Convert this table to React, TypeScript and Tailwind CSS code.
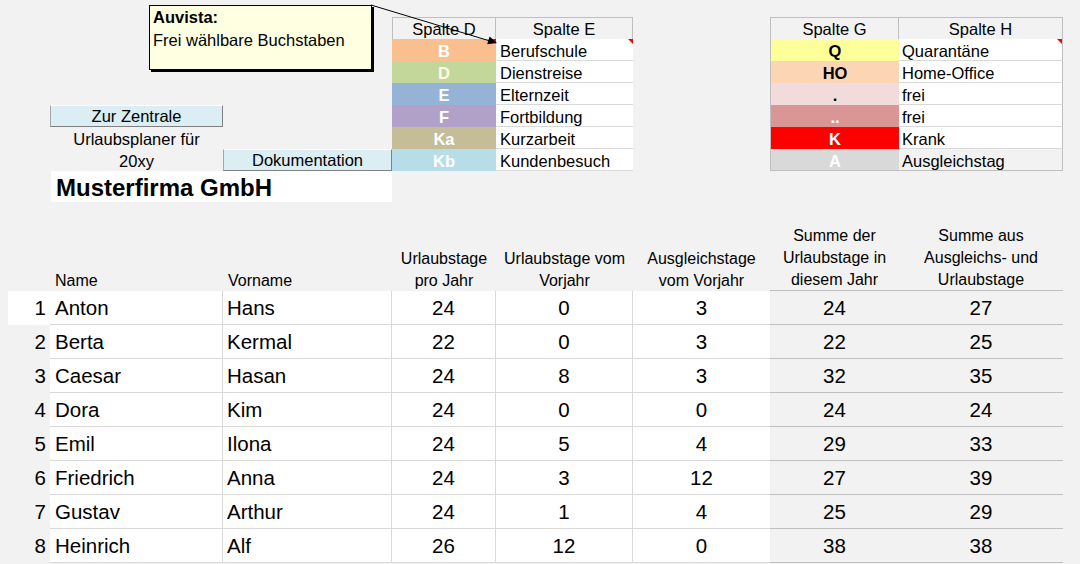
import type { ReactNode } from "react";

type Legend = {
  code: string;
  label: string;
  bg: string;
  fg: string;
  labelBg?: string;
  mark?: boolean;
};

const leftLegend: Legend[] = [
  { code: "B", label: "Berufschule", bg: "bg-[#fabf8f]", fg: "text-white", mark: true },
  { code: "D", label: "Dienstreise", bg: "bg-[#c4d79b]", fg: "text-[#fffbe8]" },
  { code: "E", label: "Elternzeit", bg: "bg-[#95b3d7]", fg: "text-white" },
  { code: "F", label: "Fortbildung", bg: "bg-[#b1a0c7]", fg: "text-white" },
  { code: "Ka", label: "Kurzarbeit", bg: "bg-[#c4bd97]", fg: "text-white" },
  { code: "Kb", label: "Kundenbesuch", bg: "bg-[#b7dee8]", fg: "text-white" },
];

const rightLegend: Legend[] = [
  { code: "Q", label: "Quarantäne", bg: "bg-[#ffff99]", fg: "text-black", mark: true },
  { code: "HO", label: "Home-Office", bg: "bg-[#fcd5b4]", fg: "text-black" },
  { code: ".", label: "frei", bg: "bg-[#f2dcdb]", fg: "text-black" },
  { code: "..", label: "frei", bg: "bg-[#da9694]", fg: "text-white" },
  { code: "K", label: "Krank", bg: "bg-[#ff0000]", fg: "text-white" },
  { code: "A", label: "Ausgleichstag", bg: "bg-[#d9d9d9]", fg: "text-white", labelBg: "bg-[#f2f2f2]" },
];

const staff = [
  { nr: 1, name: "Anton", vorname: "Hans", jahr: 24, vorjahr: 0, ausgleich: 3, summe: 24, gesamt: 27 },
  { nr: 2, name: "Berta", vorname: "Kermal", jahr: 22, vorjahr: 0, ausgleich: 3, summe: 22, gesamt: 25 },
  { nr: 3, name: "Caesar", vorname: "Hasan", jahr: 24, vorjahr: 8, ausgleich: 3, summe: 32, gesamt: 35 },
  { nr: 4, name: "Dora", vorname: "Kim", jahr: 24, vorjahr: 0, ausgleich: 0, summe: 24, gesamt: 24 },
  { nr: 5, name: "Emil", vorname: "Ilona", jahr: 24, vorjahr: 5, ausgleich: 4, summe: 29, gesamt: 33 },
  { nr: 6, name: "Friedrich", vorname: "Anna", jahr: 24, vorjahr: 3, ausgleich: 12, summe: 27, gesamt: 39 },
  { nr: 7, name: "Gustav", vorname: "Arthur", jahr: 24, vorjahr: 1, ausgleich: 4, summe: 25, gesamt: 29 },
  { nr: 8, name: "Heinrich", vorname: "Alf", jahr: 26, vorjahr: 12, ausgleich: 0, summe: 38, gesamt: 38 },
];

// red comment marker in the top right corner of a cell
function Mark() {
  return (
    <span className="absolute right-0 top-0 h-0 w-0 border-l-[5px] border-t-[5px] border-l-transparent border-t-[#ff0000]" />
  );
}

function Button({ children, w }: { children: ReactNode; w: string }) {
  return (
    <div
      className={`${w} text-center leading-[21px] bg-[#daeef3] border-t border-l border-t-white border-l-[#a6a6a6] border-b border-r border-b-[#808080] border-r-[#808080]`}
    >
      {children}
    </div>
  );
}

function TopRow({ b, c, i }: { b?: ReactNode; c?: ReactNode; i: number }) {
  const l = leftLegend[i];
  const r = rightLegend[i];
  const last = i === leftLegend.length - 1;
  return (
    <div className="flex h-[22px] text-[16.5px] leading-[25px]">
      <div className="w-[50px]" />
      <div className="w-[173px] flex">{b}</div>
      <div className="w-[169px] flex">{c}</div>
      <div className={`w-[104px] relative text-center font-bold ${l.bg} ${l.fg}`}>
        {l.code}
        {l.mark && <Mark />}
      </div>
      <div className="w-[137px] relative bg-white pl-[4px] border-b border-[#d9d9d9]">
        {l.label}
        {l.mark && <Mark />}
      </div>
      <div className="w-[137px]" />
      <div
        className={`w-[129px] text-center font-bold border-l border-[#bfbfbf] ${r.bg} ${r.fg} ${last ? "border-b" : ""}`}
      >
        {r.code}
      </div>
      <div
        className={`w-[164px] relative pl-[3px] border-r border-b ${last ? "border-[#bfbfbf]" : "border-b-[#d9d9d9] border-r-[#bfbfbf]"} ${r.labelBg ?? "bg-white"}`}
      >
        {r.label}
        {r.mark && <Mark />}
      </div>
    </div>
  );
}

export default function App() {
  return (
    <div className="relative w-[1080px] h-[564px] overflow-hidden bg-[#f2f2f2] text-black font-['Liberation_Sans',Arial,sans-serif]">
      {/* Kopfbereich */}
      <div className="h-[17px]" />
      <div className="flex h-[22px] text-[16.5px] leading-[23px]">
        <div className="w-[392px]" />
        <div className="w-[104px] text-center border-t border-l border-r border-[#bfbfbf]">Spalte D</div>
        <div className="w-[137px] text-center border-t border-r border-[#bfbfbf]">Spalte E</div>
        <div className="w-[137px]" />
        <div className="w-[129px] text-center border-t border-l border-r border-[#bfbfbf]">Spalte G</div>
        <div className="w-[164px] text-center border-t border-r border-[#bfbfbf]">Spalte H</div>
      </div>
      <TopRow i={0} />
      <TopRow i={1} />
      <TopRow i={2} />
      <TopRow i={3} b={<Button w="w-[174px]">Zur Zentrale</Button>} />
      <TopRow i={4} b={<div className="w-full text-center">Urlaubsplaner für</div>} />
      <TopRow
        i={5}
        b={<div className="w-full text-center">20xy</div>}
        c={<Button w="w-[170px]">Dokumentation</Button>}
      />
      <div className="flex h-[31px]">
        <div className="w-[51px]" />
        <div className="w-[341px] bg-white pl-[5px] text-[24px] font-bold leading-[33px]">
          Musterfirma GmbH
        </div>
      </div>
      <div className="h-[22px]" />

      {/* Tabelle */}
      <div className="flex h-[67px] items-end text-[16px] leading-[22px]">
        <div className="w-[50px]" />
        <div className="w-[173px] pl-[5px] translate-y-[1px]">Name</div>
        <div className="w-[169px] pl-[5px] translate-y-[1px]">Vorname</div>
        <div className="w-[104px] text-center translate-y-[1px]">
          Urlaubstage
          <br />
          pro Jahr
        </div>
        <div className="w-[137px] text-center translate-y-[1px]">
          Urlaubstage vom
          <br />
          Vorjahr
        </div>
        <div className="w-[137px] text-center translate-y-[1px]">
          Ausgleichstage
          <br />
          vom Vorjahr
        </div>
        <div className="w-[129px] h-full flex flex-col justify-end text-center border-b border-[#bfbfbf]">
          <div className="translate-y-[1px]">
            Summe der
            <br />
            Urlaubstage in
            <br />
            diesem Jahr
          </div>
        </div>
        <div className="w-[164px] h-full flex flex-col justify-end text-center border-b border-[#bfbfbf]">
          <div className="translate-y-[1px]">
            Summe aus
            <br />
            Ausgleichs- und
            <br />
            Urlaubstage
          </div>
        </div>
      </div>
      {staff.map((p) => (
        <div key={p.nr} className="flex h-[34px] text-[20.5px] leading-[34px]">
          <div className="w-[8px]" />
          <div className={`w-[42px] pr-[4px] text-right ${p.nr === 1 ? "bg-white" : ""}`}>{p.nr}</div>
          <div className="w-[173px] bg-white pl-[5px] border-r border-b border-[#d9d9d9]">{p.name}</div>
          <div className="w-[169px] bg-white pl-[4px] border-r border-b border-[#d9d9d9]">{p.vorname}</div>
          <div className="w-[104px] bg-white text-center border-r border-b border-[#d9d9d9]">{p.jahr}</div>
          <div className="w-[137px] bg-white text-center border-r border-b border-[#d9d9d9]">{p.vorjahr}</div>
          <div className="w-[137px] bg-white text-center border-b border-[#d9d9d9]">{p.ausgleich}</div>
          <div className="w-[129px] text-center border-b border-[#bfbfbf]">{p.summe}</div>
          <div className="w-[164px] text-center border-b border-[#bfbfbf]">{p.gesamt}</div>
        </div>
      ))}

      {/* Kommentar mit Pfeil */}
      <svg className="absolute left-0 top-0 pointer-events-none" width="520" height="60">
        <line x1="371" y1="5" x2="490" y2="41" stroke="#000" strokeWidth="1" />
        <polygon points="497,43 489.6,36.6 487.2,44.2" fill="#000" />
      </svg>
      <div className="absolute left-[149px] top-[5px] w-[223px] h-[65px] bg-[#ffffe1] border border-black shadow-[2px_2px_0_#000] pl-[3px] text-[16.5px] leading-[23px]">
        <div className="font-bold">Auvista:</div>
        <div>Frei wählbare Buchstaben</div>
      </div>
    </div>
  );
}
